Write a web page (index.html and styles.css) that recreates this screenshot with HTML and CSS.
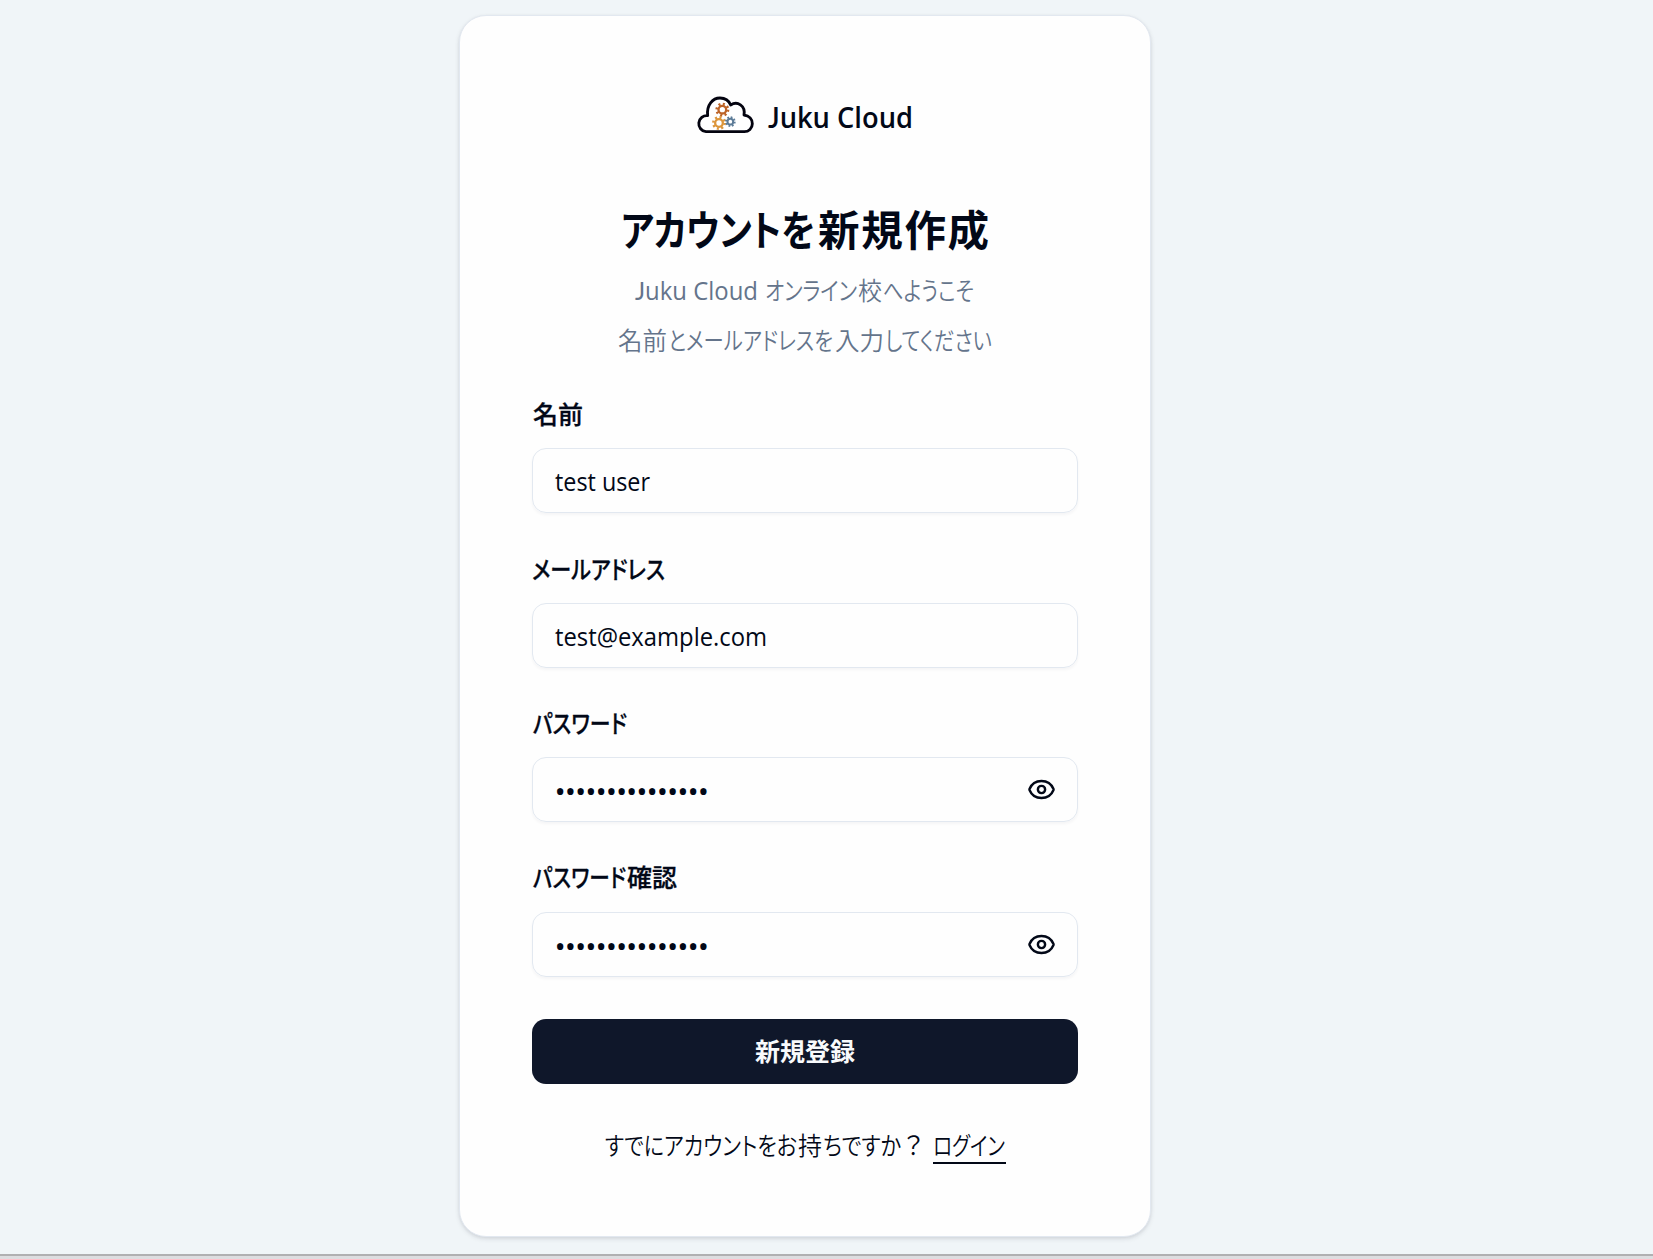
FILE: index.html
```html
<!DOCTYPE html>
<html lang="ja">
<head>
<meta charset="utf-8">
<title>Juku Cloud</title>
<link rel="stylesheet" href="styles.css">
</head>
<body>
<main class="page">
  <section class="card">
    <header class="brand">
      <svg class="logo" viewBox="0 0 210 150" aria-hidden="true">
        <path class="cloud" d="M48 125A24 24 0 0 1 53 77C49 45 68 24 90 24C105 24 117 33 122 45C142 32 167 47 162 75C178 77 187 88 187 101C187 115 176 125 163 125Z"/>
        <g class="gear rust" transform="translate(97 59)"><circle r="11.5" stroke-width="7"/><circle r="17" pathLength="80" stroke-width="8" stroke-dasharray="4.5 5.5"/></g>
        <g class="gear amber" transform="translate(87 99)"><circle r="11.5" stroke-width="7"/><circle r="17" pathLength="80" stroke-width="8" stroke-dasharray="4.5 5.5"/></g>
        <g class="gear steel" transform="translate(121 95)"><circle r="8.5" stroke-width="6"/><circle r="13" pathLength="80" stroke-width="6" stroke-dasharray="5 5"/></g>
      </svg>
      <svg class="line brand-name"><text x="0" y="38" textLength="145" lengthAdjust="spacingAndGlyphs"><tspan class="cap-j">J</tspan>uku Cloud</text></svg>
    </header>

    <h1 class="title">
      <svg class="line"><text y="56"><tspan x="89" textLength="194" lengthAdjust="spacingAndGlyphs">アカウントを</tspan><tspan class="kanji" x="286">新規作成</tspan></text></svg>
    </h1>
    <p class="lead">
      <svg class="line"><text y="35"><tspan class="latin" x="103" textLength="123" lengthAdjust="spacingAndGlyphs"><tspan class="cap-j">J</tspan>uku Cloud</tspan><tspan x="233" textLength="92" lengthAdjust="spacingAndGlyphs">オンライン</tspan><tspan x="326" textLength="24" lengthAdjust="spacingAndGlyphs">校</tspan><tspan x="351" textLength="91" lengthAdjust="spacingAndGlyphs">へようこそ</tspan></text></svg>
    </p>
    <p class="lead">
      <svg class="line"><text y="34.5"><tspan x="86" textLength="49" lengthAdjust="spacingAndGlyphs">名前</tspan><tspan x="136" textLength="165" lengthAdjust="spacingAndGlyphs">とメールアドレスを</tspan><tspan x="303" textLength="49" lengthAdjust="spacingAndGlyphs">入力</tspan><tspan x="353" textLength="107" lengthAdjust="spacingAndGlyphs">してください</tspan></text></svg>
    </p>

    <form class="form">
      <div class="field">
        <svg class="line label"><text x="1" y="39">名前</text></svg>
        <div class="control"><svg class="line value"><text x="22" y="42" textLength="95" lengthAdjust="spacingAndGlyphs">test user</text></svg></div>
      </div>
      <div class="field">
        <svg class="line label"><text x="0" y="38.5" textLength="133" lengthAdjust="spacingAndGlyphs">メールアドレス</text></svg>
        <div class="control"><svg class="line value"><text x="22" y="42" textLength="212" lengthAdjust="spacingAndGlyphs">test@example.com</text></svg></div>
      </div>
      <div class="field">
        <svg class="line label"><text x="1" y="39" textLength="94" lengthAdjust="spacingAndGlyphs">パスワード</text></svg>
        <div class="control">
          <svg class="line value dots"><text x="21.5" y="43.5" textLength="154.5" lengthAdjust="spacing">•••••••••••••••</text></svg>
          <svg class="eye" viewBox="0 0 24 24"><path d="M2.062 12.348a1 1 0 0 1 0-.696 10.75 10.75 0 0 1 19.876 0 1 1 0 0 1 0 .696 10.75 10.75 0 0 1-19.876 0"/><circle cx="12" cy="12" r="3"/></svg>
        </div>
      </div>
      <div class="field last">
        <svg class="line label"><text y="38"><tspan x="1" textLength="93" lengthAdjust="spacingAndGlyphs">パスワード</tspan><tspan x="95">確認</tspan></text></svg>
        <div class="control">
          <svg class="line value dots"><text x="21.5" y="43.5" textLength="154.5" lengthAdjust="spacing">•••••••••••••••</text></svg>
          <svg class="eye" viewBox="0 0 24 24"><path d="M2.062 12.348a1 1 0 0 1 0-.696 10.75 10.75 0 0 1 19.876 0 1 1 0 0 1 0 .696 10.75 10.75 0 0 1-19.876 0"/><circle cx="12" cy="12" r="3"/></svg>
        </div>
      </div>
      <button class="submit" type="button">新規登録</button>
    </form>

    <p class="signin">
      <svg class="line question"><text y="31"><tspan x="0" textLength="192" lengthAdjust="spacingAndGlyphs">すでにアカウントをお</tspan><tspan x="193" textLength="24" lengthAdjust="spacingAndGlyphs">持</tspan><tspan x="218" textLength="78" lengthAdjust="spacingAndGlyphs">ちですか</tspan><tspan class="mark" x="296">？</tspan></text></svg>
      <a class="link" href="#"><svg class="line"><text x="0" y="31" textLength="72" lengthAdjust="spacingAndGlyphs">ログイン</text></svg></a>
    </p>
  </section>
</main>
<footer class="edge"></footer>
</body>
</html>
```
FILE: styles.css
```css
* { box-sizing: border-box; margin: 0; }
body {
  height: 1259px;
  overflow: hidden;
  display: flex;
  flex-direction: column;
  background: #f0f5f8;
  color: #020817;
  font: 400 25px/1 "Open Sans", "Noto Sans CJK JP", sans-serif;
}
.page { height: 1254px; padding-top: 15px; display: flex; justify-content: center; align-items: flex-start; padding-right: 43px; }
.card {
  width: 692px;
  height: 1222px;
  padding: 74px 72px 0;
  border: 1px solid #e2e8f0;
  border-radius: 27px;
  background: #fefefe;
  box-shadow: 0 2px 5px rgba(15, 23, 42, .1), 0 1px 3px rgba(15, 23, 42, .06);
}
.line { display: block; width: 100%; height: 100%; overflow: visible; fill: currentColor; font-feature-settings: "palt"; }
.brand { display: flex; height: 50px; padding-left: 158px; gap: 8px; }
.logo { width: 70px; height: 50px; flex: none; }
.cloud { fill: #fff; stroke: #03030f; stroke-width: 8.5; stroke-linejoin: round; }
.gear { fill: none; }
.rust { stroke: #bd6428; }
.amber { stroke: #dc963c; }
.steel { stroke: #5d7c98; }
.brand-name { width: 144px; font-size: 28.5px; font-weight: 600; }
.cap-j { font-family: Lato, sans-serif; }
.title { height: 75px; margin-top: 50px; font-size: 41.5px; font-weight: 700; }
.kanji { font-feature-settings: normal; letter-spacing: 1.7px; }
.lead { height: 50px; color: #64748b; font-weight: 350; font-family: "Open Sans", "Noto Sans CJK JP DemiLight", "Noto Sans CJK JP", sans-serif; }
.latin { font-weight: 400; }
.form { display: flex; flex-direction: column; padding-top: 20px; }
.field { height: 154.7px; }
.field.last { height: 128px; }
.label { height: 62.9px; font-weight: 500; font-family: "Open Sans", "Noto Sans CJK JP Medium", "Noto Sans CJK JP", sans-serif; stroke: currentColor; stroke-width: .3px; }
.control {
  position: relative;
  height: 65px;
  border: 1px solid #e2e8f0;
  border-radius: 14px;
  box-shadow: 0 2px 3px rgba(15, 23, 42, .04);
}
.dots { font-size: 30px; }
.eye { position: absolute; right: 21px; top: 17px; width: 29px; height: 29px; fill: none; stroke: #020817; stroke-width: 2; stroke-linecap: round; }
.submit { height: 65px; margin-top: 41.9px; padding: 1px 0 0; border: 0; border-radius: 14px; background: #0f172a; color: #f8fafc; font: inherit; font-weight: 600; }
.signin { display: flex; height: 40px; margin-top: 40px; padding-left: 73px; font-weight: 350; }
.question { width: 328px; flex: none; }
.mark { font-feature-settings: normal; }
.link { width: 73px; height: 40px; border-bottom: 2px solid #020817; color: inherit; }
.edge { height: 5px; border-top: 2px solid #b0b0b2; background: #dddde0; }
```
